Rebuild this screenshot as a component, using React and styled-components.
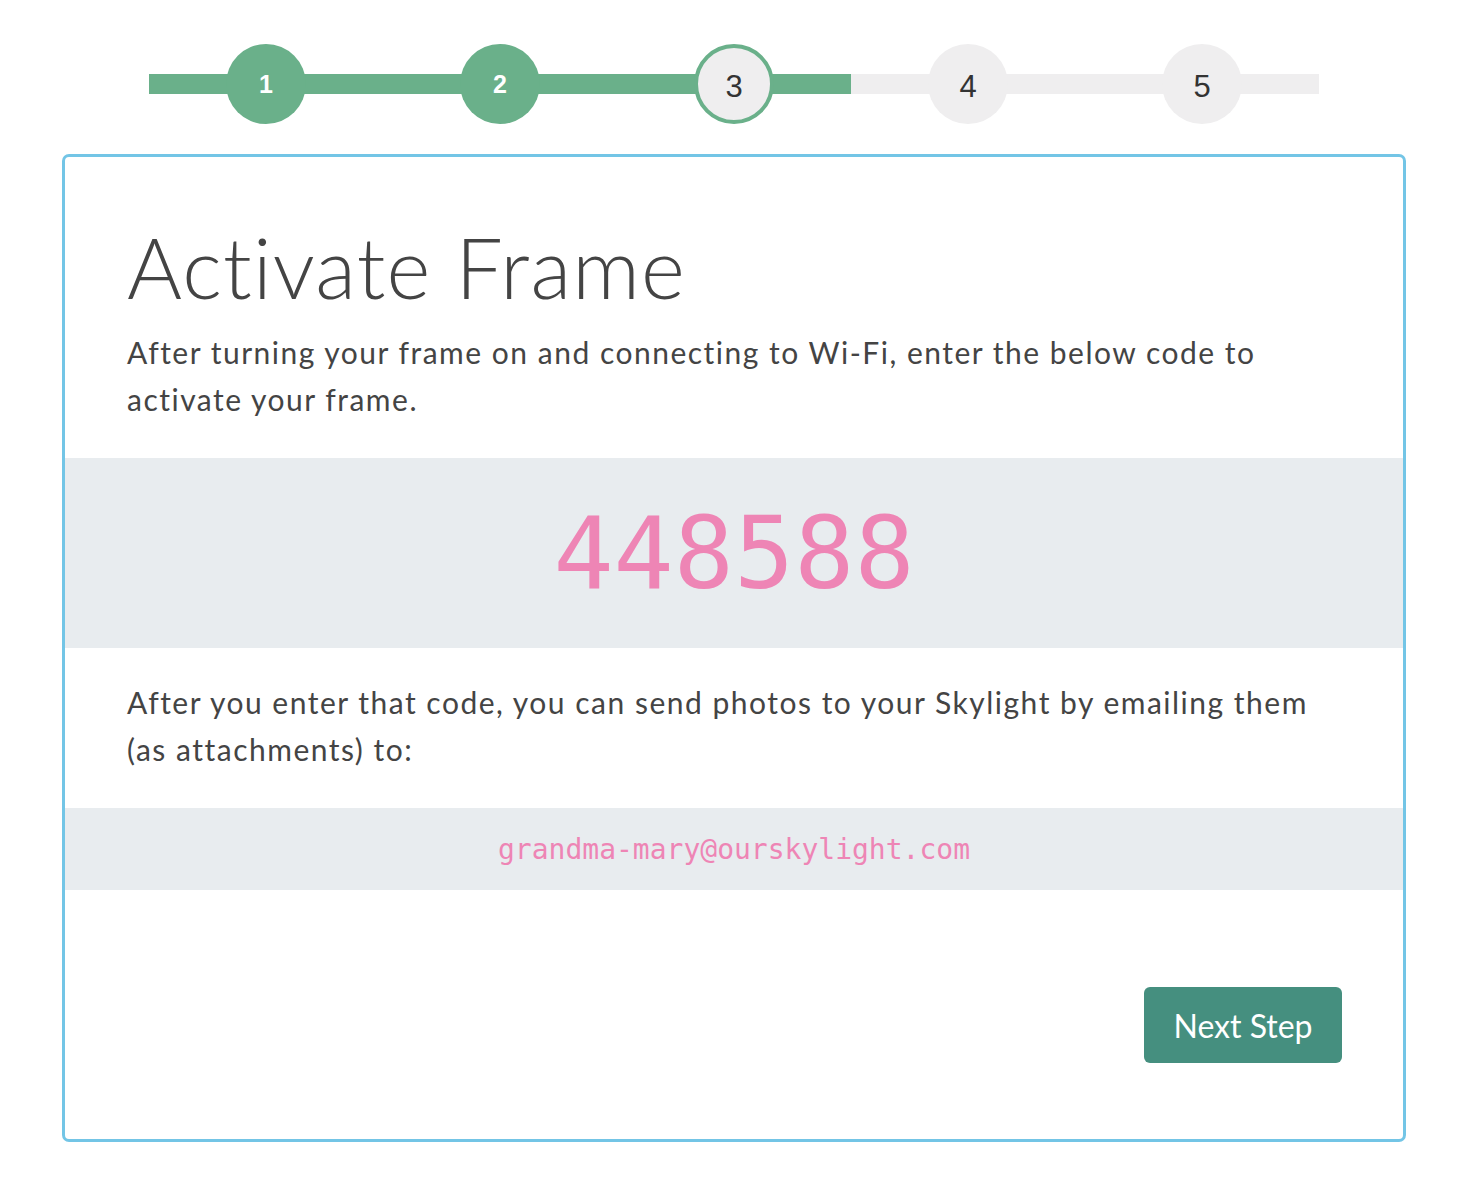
import React from "react";
import styled, { createGlobalStyle } from "styled-components";

const Global = createGlobalStyle`
  html, body { margin: 0; padding: 0; background: #fff; }
  body { font-family: Lato, "Open Sans", sans-serif; color: #444; }
`;

const Page = styled.div`
  width: 1344px;
  margin-left: 62px;
  padding-top: 44px;
  padding-bottom: 40px;
`;

const Stepper = styled.div`
  position: relative;
  width: 1170px;
  margin: 0 auto 30px;
  display: grid;
  grid-template-columns: repeat(5, 1fr);
  height: 80px;
`;

const Track = styled.div`
  position: absolute;
  left: 0;
  right: 0;
  top: 30px;
  height: 20px;
  background: #efeeef;
`;

const TrackFill = styled.div`
  height: 100%;
  background: #6ab08a;
`;

const StepCell = styled.div`
  position: relative;
  display: flex;
  justify-content: center;
`;

const Circle = styled.div`
  width: 80px;
  height: 80px;
  box-sizing: border-box;
  border-radius: 50%;
  display: flex;
  align-items: center;
  justify-content: center;
  font-family: "Liberation Sans", Arial, sans-serif;
  background: ${(p) => (p.$state === "done" ? "#6ab08a" : "#efeeef")};
  border: ${(p) => (p.$state === "current" ? "4px solid #6ab08a" : "none")};
  color: ${(p) => (p.$state === "done" ? "#fff" : "#333")};
  font-size: ${(p) => (p.$state === "done" ? "25px" : "31px")};
  font-weight: ${(p) => (p.$state === "done" ? 700 : 400)};
  padding-top: ${(p) => (p.$state === "done" ? "0" : "6px")};
`;

const Card = styled.div`
  border: 3px solid #73c5e6;
  border-radius: 7px;
  background: #fff;
  min-height: 988px;
  box-sizing: border-box;
  display: flex;
  flex-direction: column;
`;

const Section = styled.div`
  padding: ${(p) => p.$pad || "0 62px"};
`;

const Title = styled.h1`
  margin: 0 0 14px;
  font-family: Lato, sans-serif;
  font-weight: 300;
  font-size: 84px;
  line-height: 96px;
  color: #444;
  letter-spacing: 1.2px;
`;

const Text = styled.p`
  margin: 0;
  max-width: 1200px;
  font-family: Lato, sans-serif;
  font-weight: 400;
  font-size: 30px;
  line-height: 47px;
  color: #444;
  letter-spacing: 1.5px;
`;

const Band = styled.div`
  background: #e8ecef;
  height: ${(p) => p.$h}px;
  display: flex;
  align-items: center;
  justify-content: center;
  color: #ee85b5;
  font-family: "DejaVu Sans Mono", "Liberation Mono", monospace;
  font-size: ${(p) => p.$size}px;
`;

const Footer = styled.div`
  margin-top: auto;
  display: flex;
  justify-content: flex-end;
  padding: 0 61px 76px;
`;

const Button = styled.button`
  width: 198px;
  height: 76px;
  border: none;
  border-radius: 6px;
  background: #458f7f;
  color: #fff;
  font-family: Lato, sans-serif;
  font-size: 32px;
  font-weight: 400;
  cursor: pointer;
`;

const steps = [
  { n: 1, state: "done" },
  { n: 2, state: "done" },
  { n: 3, state: "current" },
  { n: 4, state: "todo" },
  { n: 5, state: "todo" },
];

export default function App() {
  return (
    <>
      <Global />
      <Page>
        <Stepper>
          <Track>
            <TrackFill style={{ width: `${(3 / 5) * 100}%` }} />
          </Track>
          {steps.map((s) => (
            <StepCell key={s.n}>
              <Circle $state={s.state}>{s.n}</Circle>
            </StepCell>
          ))}
        </Stepper>
        <Card>
          <Section $pad="62px 62px 35px">
            <Title>Activate Frame</Title>
            <Text>
              After turning your frame on and connecting to Wi-Fi, enter the below code to activate your frame.
            </Text>
          </Section>
          <Band $h={190} $size={100}>448588</Band>
          <Section $pad="31px 62px 35px">
            <Text>
              After you enter that code, you can send photos to your Skylight by emailing them (as attachments) to:
            </Text>
          </Section>
          <Band $h={82} $size={28}>grandma-mary@ourskylight.com</Band>
          <Footer>
            <Button>Next Step</Button>
          </Footer>
        </Card>
      </Page>
    </>
  );
}
